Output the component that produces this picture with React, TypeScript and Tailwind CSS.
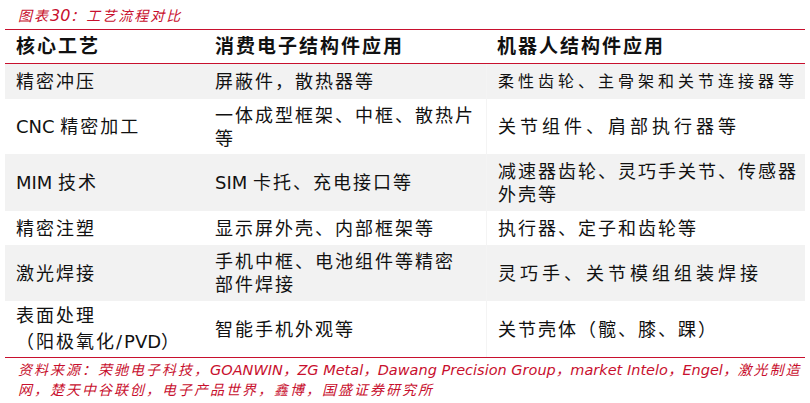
import React from 'react';

const FONT = { fontFamily: '"DejaVu Sans", "Noto Sans CJK SC", sans-serif' };

const L = ({ children }: { children: React.ReactNode }) => (
  <span className="tracking-normal">{children}</span>
);

const rows: { a: React.ReactNode; b: React.ReactNode; c: React.ReactNode; gray: boolean; cls?: string }[] = [
  { a: '精密冲压', b: '屏蔽件，散热器等', c: <span className="text-[16px] tracking-[4px]">柔性齿轮、主骨架和关节连接器等</span>, gray: true, cls: 'h-[35px]' },
  { a: <><L>CNC </L>精密加工</>, b: <>一体成型框架、中框、散热片<br />等</>, c: <span className="tracking-[4px]">关节组件、肩部执行器等</span>, gray: false, cls: 'h-[55px]' },
  { a: <><L>MIM </L>技术</>, b: <><L>SIM </L>卡托、充电接口等</>, c: <>减速器齿轮、灵巧手关节、传感器<br />外壳等</>, gray: true, cls: 'h-[57px]' },
  { a: '精密注塑', b: '显示屏外壳、内部框架等', c: '执行器、定子和齿轮等', gray: false, cls: 'h-[34px]' },
  { a: '激光焊接', b: <>手机中框、电池组件等精密<br />部件焊接</>, c: <span className="tracking-[4px]">灵巧手、关节模组组装焊接</span>, gray: true, cls: 'h-[56px]' },
  { a: <span className="leading-[26px]">表面处理<br />（阳极氧化/<L>PVD</L>）</span>, b: '智能手机外观等', c: '关节壳体（髋、膝、踝）', gray: false, cls: 'h-[56px]' },
];

export default function App() {
  return (
    <div className="w-[810px] h-[403px] bg-white text-[#111]" style={FONT}>
      <div className="pl-[18px] pt-[4px] h-[29px] text-[14px] italic tracking-[2px] text-[#c8102e]">
        图表<span className="text-[16px] tracking-normal">30</span>：工艺流程对比
      </div>
      <div className="mx-[5px] border-t-[1.5px] border-[#c8102e]">
        <div className="grid grid-cols-[200px_281px_1fr] h-[34px] items-center border-b-[1.5px] border-[#c8102e] font-bold text-[19px] tracking-[2px]">
          <div className="pl-[11px]">核心工艺</div>
          <div className="pl-[10px]">消费电子结构件应用</div>
          <div className="pl-[11px]">机器人结构件应用</div>
        </div>
        {rows.map((r, i) => (
          <div
            key={i}
            className={`grid grid-cols-[200px_281px_1fr] items-center text-[18px] leading-[23px] tracking-[2px] ${r.gray ? 'bg-[#f2f2f2]' : 'bg-white'} ${r.cls ?? ''}`}
          >
            <div className="pl-[11px]">{r.a}</div>
            <div className="pl-[10px]">{r.b}</div>
            <div className="pl-[11px] h-full flex items-center border-l border-[#f4f4f4]">{r.c}</div>
          </div>
        ))}
        <div className="border-t-[1.5px] border-[#c8102e] pl-[13px] pt-[2px] text-[14px] leading-[20px] italic text-[#c8102e] whitespace-nowrap">
          <span className="tracking-[2px]">资料来源：荣驰电子科技，</span>
          <span className="text-[14.5px]">GOANWIN，ZG Metal，Dawang Precision Group，market Intelo，Engel，</span>
          <span className="tracking-[2px]">激光制造</span>
          <br />
          <span className="tracking-[2px]">网，楚天中谷联创，电子产品世界，鑫博，国盛证券研究所</span>
        </div>
      </div>
    </div>
  );
}
